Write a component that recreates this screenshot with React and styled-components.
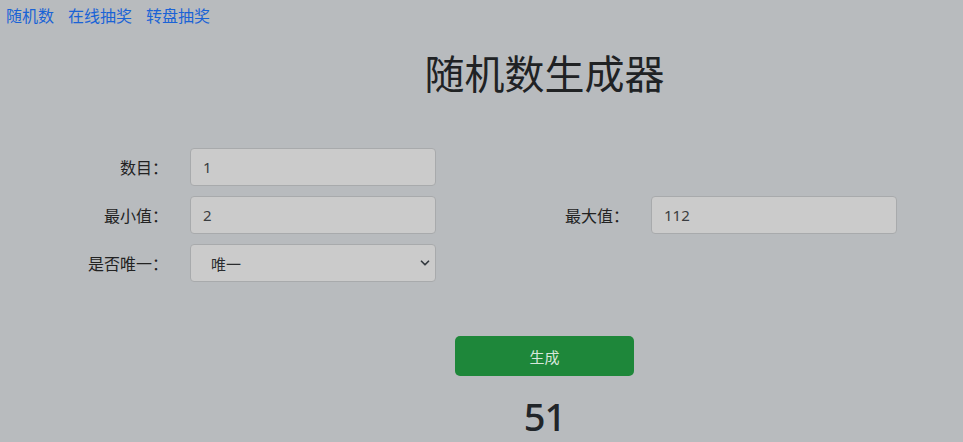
import React, { useState } from "react";
import styled, { createGlobalStyle } from "styled-components";
import { ChevronDown } from "lucide-react";

const GlobalStyle = createGlobalStyle`
  html, body {
    margin: 0;
    background: #b8bbbe;
  }
  body {
    font-family: "Noto Sans", "Noto Sans CJK SC", sans-serif;
    color: #212529;
    font-size: 16px;
  }
`;

const Nav = styled.nav`
  display: flex;
  gap: 14px;
  padding: 2px 6px 0;
  height: 25px;
  align-items: center;
`;

const NavLink = styled.a`
  color: #1a63d6;
  text-decoration: none;
  font-size: 16px;
  line-height: 24px;
  font-family: "Noto Sans CJK SC", sans-serif;
`;

const Center = styled.div`
  margin-left: 126px;
  display: flex;
  flex-direction: column;
  align-items: center;
`;

const Title = styled.h1`
  margin: 18px 0 0;
  font-size: 40px;
  font-weight: 400;
  line-height: 54px;
  font-family: "Noto Sans CJK SC", sans-serif;
  color: #202224;
`;

const Form = styled.div`
  margin-top: 49px;
  display: grid;
  grid-template-columns: 176px 246px 187px 246px;
  column-gap: 14px;
  row-gap: 10px;
  align-items: center;
`;

const Label = styled.label`
  text-align: right;
  padding-right: 8px;
  font-family: "Noto Sans CJK SC", sans-serif;
  font-size: 16px;
  color: #222;
`;

const Input = styled.input`
  box-sizing: border-box;
  height: 38px;
  width: 100%;
  background: #cbcbcb;
  border: 1px solid #a8aaac;
  border-radius: 4px;
  padding: 0 12px;
  font-family: "Noto Sans", "Noto Sans CJK SC", sans-serif;
  font-size: 15px;
  color: #3a3d40;
  outline: none;
`;

const SelectWrap = styled.div`
  position: relative;
  height: 38px;
`;

const Select = styled.select`
  box-sizing: border-box;
  appearance: none;
  height: 38px;
  width: 100%;
  background: #cbcbcb;
  border: 1px solid #a8aaac;
  border-radius: 4px;
  padding: 0 12px 0 20px;
  font-family: "Noto Sans CJK SC", sans-serif;
  font-size: 15px;
  color: #2a2c2e;
  outline: none;
`;

const Chevron = styled(ChevronDown)`
  position: absolute;
  right: 4px;
  top: 12px;
  pointer-events: none;
  color: #343a40;
`;

const Actions = styled(Center)`
  margin-top: 54px;
`;

const Button = styled.button`
  width: 179px;
  height: 40px;
  border: none;
  border-radius: 5px;
  background: #1e873a;
  color: #d6e6da;
  font-size: 15px;
  font-family: "Noto Sans CJK SC", sans-serif;
  cursor: pointer;
`;

const Result = styled.h2`
  margin: 21px 0 0;
  font-size: 38px;
  font-weight: 500;
  line-height: 38px;
  color: #212529;
  font-family: "Noto Sans", sans-serif;
  letter-spacing: -1px;
`;

export default function App() {
  const [count, setCount] = useState("1");
  const [min, setMin] = useState("2");
  const [max, setMax] = useState("112");
  const [unique, setUnique] = useState("1");
  const [result, setResult] = useState([51]);

  const generate = () => {
    const lo = parseInt(min, 10);
    const hi = parseInt(max, 10);
    const n = parseInt(count, 10) || 1;
    const out = [];
    while (out.length < n) {
      const v = Math.floor(Math.random() * (hi - lo + 1)) + lo;
      if (unique === "1" && out.includes(v)) continue;
      out.push(v);
    }
    setResult(out);
  };

  return (
    <>
      <GlobalStyle />
      <Nav>
        <NavLink href="#">随机数</NavLink>
        <NavLink href="#">在线抽奖</NavLink>
        <NavLink href="#">转盘抽奖</NavLink>
      </Nav>
      <Center>
        <Title>随机数生成器</Title>
      </Center>
      <Form>
        <Label>数目：</Label>
        <Input value={count} onChange={e => setCount(e.target.value)} />
        <span />
        <span />

        <Label>最小值：</Label>
        <Input value={min} onChange={e => setMin(e.target.value)} />
        <Label>最大值：</Label>
        <Input value={max} onChange={e => setMax(e.target.value)} />

        <Label>是否唯一：</Label>
        <SelectWrap>
          <Select value={unique} onChange={e => setUnique(e.target.value)}>
            <option value="1">唯一</option>
            <option value="0">不唯一</option>
          </Select>
          <Chevron size={14} strokeWidth={3} />
        </SelectWrap>
      </Form>
      <Actions>
        <Button onClick={generate}>生成</Button>
        <Result>{result.join(", ")}</Result>
      </Actions>
    </>
  );
}
